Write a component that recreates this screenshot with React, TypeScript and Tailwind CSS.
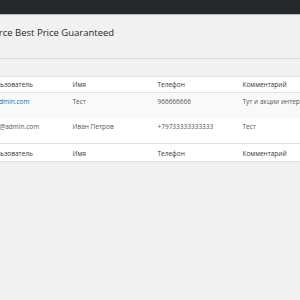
const ROWS = [
  { email: "i@admin.com", name: "Тест", phone: "966666666", comment: "Тут и акции интересные есть" },
  { email: "test@admin.com", name: "Иван Петров", phone: "+79733333333333", comment: "Тест" },
];

const COLS = ["Пользователь", "Имя", "Телефон", "Комментарий"];

export default function App() {
  return (
    <div className="w-[300px] h-[300px] overflow-hidden bg-[#f1f1f1] font-['Open_Sans',sans-serif]">
      <div className="h-[14px] bg-[#23282d]" />
      <div className="h-px bg-[#b4b9be]" />

      <h1 className="ml-[-56px] w-[600px] mt-[11px] text-[9.5px] leading-[14px] text-[#23282d] font-normal">
        WooCommerce Best Price Guaranteed
      </h1>
      <div className="mt-[18px] h-px bg-[#dcdcdc]" />

      <div className="ml-[-18px] w-[600px] mt-[17px]">
        <table className="w-full table-fixed bg-white border border-[#e5e5e5] border-collapse text-[6.5px] text-left">
          <colgroup>
            <col className="w-[85px]" />
            <col className="w-[85px]" />
            <col className="w-[85px]" />
            <col />
          </colgroup>
          <thead>
            <tr className="border-b border-[#e1e1e1]">
              {COLS.map((c) => (
                <th key={c} className="pl-[5px] font-normal text-[#32373c] py-[3px] leading-[9px] whitespace-nowrap">
                  {c}
                </th>
              ))}
            </tr>
          </thead>
          <tbody>
            {ROWS.map((r, i) => (
              <tr key={r.email} className={i % 2 === 0 ? "bg-[#f9f9f9]" : "bg-white"}>
                <td className="pl-[5px] pt-[4px] pb-[12px] leading-[9px] align-top text-[#0073aa] whitespace-nowrap">
                  {i === 0 ? r.email : <span className="text-[#555]">{r.email}</span>}
                </td>
                <td className="pl-[5px] pt-[4px] pb-[12px] leading-[9px] align-top text-[#555] whitespace-nowrap">{r.name}</td>
                <td className="pl-[5px] pt-[4px] pb-[12px] leading-[9px] align-top text-[#555] whitespace-nowrap">{r.phone}</td>
                <td className="pl-[5px] pt-[4px] pb-[12px] leading-[9px] align-top text-[#555] whitespace-nowrap">{r.comment}</td>
              </tr>
            ))}
          </tbody>
          <tfoot>
            <tr className="border-t border-[#e1e1e1]">
              {COLS.map((c) => (
                <th key={c} className="pl-[5px] font-normal text-[#32373c] pt-[5px] pb-[3px] leading-[9px] whitespace-nowrap">
                  {c}
                </th>
              ))}
            </tr>
          </tfoot>
        </table>
      </div>
    </div>
  );
}
